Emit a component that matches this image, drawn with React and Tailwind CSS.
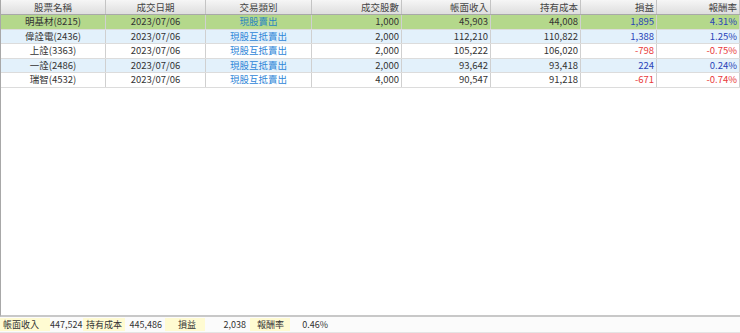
import React from "react";

const cols = [
  { w: "w-[105px]", align: "text-center" },
  { w: "w-[100px]", align: "text-center" },
  { w: "w-[106px]", align: "text-center" },
  { w: "w-[90px]", align: "text-right" },
  { w: "w-[89px]", align: "text-right" },
  { w: "w-[90px]", align: "text-right" },
  { w: "w-[76px]", align: "text-right" },
  { w: "flex-1", align: "text-right" },
];

const headers = ["股票名稱", "成交日期", "交易類別", "成交股數", "帳面收入", "持有成本", "損益", "報酬率"];

const rows = [
  { bg: "bg-[#b4d88b]", name: "明基材(8215)", type: "現股賣出", qty: "1,000", inc: "45,903", cost: "44,008", pl: "1,895", rr: "4.31%", neg: false },
  { bg: "bg-[#e3f1fb]", name: "偉詮電(2436)", type: "現股互抵賣出", qty: "2,000", inc: "112,210", cost: "110,822", pl: "1,388", rr: "1.25%", neg: false },
  { bg: "bg-white", name: "上詮(3363)", type: "現股互抵賣出", qty: "2,000", inc: "105,222", cost: "106,020", pl: "-798", rr: "-0.75%", neg: true },
  { bg: "bg-[#e3f1fb]", name: "一詮(2486)", type: "現股互抵賣出", qty: "2,000", inc: "93,642", cost: "93,418", pl: "224", rr: "0.24%", neg: false },
  { bg: "bg-white", name: "瑞智(4532)", type: "現股互抵賣出", qty: "4,000", inc: "90,547", cost: "91,218", pl: "-671", rr: "-0.74%", neg: true },
];

const font = { fontFamily: '"Noto Sans CJK TC", "Noto Sans", sans-serif' };

export default function App() {
  return (
    <div className="w-[740px] h-[333px] bg-white flex flex-col text-[9.5px] text-[#333]" style={font}>
      <div className="flex-1 border-l border-[#a8a8a8] border-b-2 border-b-[#c8c8c8] flex flex-col">
        <div className="flex h-[15px] bg-gradient-to-b from-[#f6f6f6] to-[#dedede] border-b border-[#a8a8a8] leading-[14px]">
          {headers.map((h, i) => (
            <div key={i} className={`${cols[i].w} ${cols[i].align} border-r border-[#c4c4c4] px-[2px] text-[#444] overflow-hidden whitespace-nowrap`}>
              {h}
            </div>
          ))}
        </div>
        {rows.map((r, ri) => {
          const cells = [r.name, "2023/07/06", r.type, r.qty, r.inc, r.cost, r.pl, r.rr];
          return (
            <div key={ri} className={`flex h-[14.6px] leading-[13.6px] border-b border-[#dcdcdc] ${r.bg}`}>
              {cells.map((c, i) => {
                let color = "text-[#333]";
                if (i === 2) color = ri === 0 ? "text-[#2a86c0]" : "text-[#2f86d8]";
                if (i >= 6) color = r.neg ? "text-[#e83a3a]" : "text-[#2a44b8]";
                return (
                  <div key={i} className={`${cols[i].w} ${cols[i].align} ${color} border-r border-[#d0d0d0] px-[2px] overflow-hidden whitespace-nowrap`}>
                    {c}
                  </div>
                );
              })}
            </div>
          );
        })}
      </div>
      <div className="h-[16px] flex items-center text-[9px] leading-[13px] border-b border-[#e4e4e4] bg-[#fbfbfb]">
        <div className="w-[50px] bg-[#fffbd2] pl-[3px]">帳面收入</div>
        <div className="w-[32px] text-right">447,524</div>
        <div className="w-[42px] bg-[#fffbd2] ml-[1px] pl-[3px]">持有成本</div>
        <div className="w-[37px] text-right">445,486</div>
        <div className="w-[40px] bg-[#fffbd2] ml-[3px] pl-[13px]">損益</div>
        <div className="w-[41px] text-right">2,038</div>
        <div className="w-[40px] bg-[#fffbd2] ml-[4px] pl-[7px]">報酬率</div>
        <div className="w-[38px] text-right">0.46%</div>
      </div>
    </div>
  );
}
